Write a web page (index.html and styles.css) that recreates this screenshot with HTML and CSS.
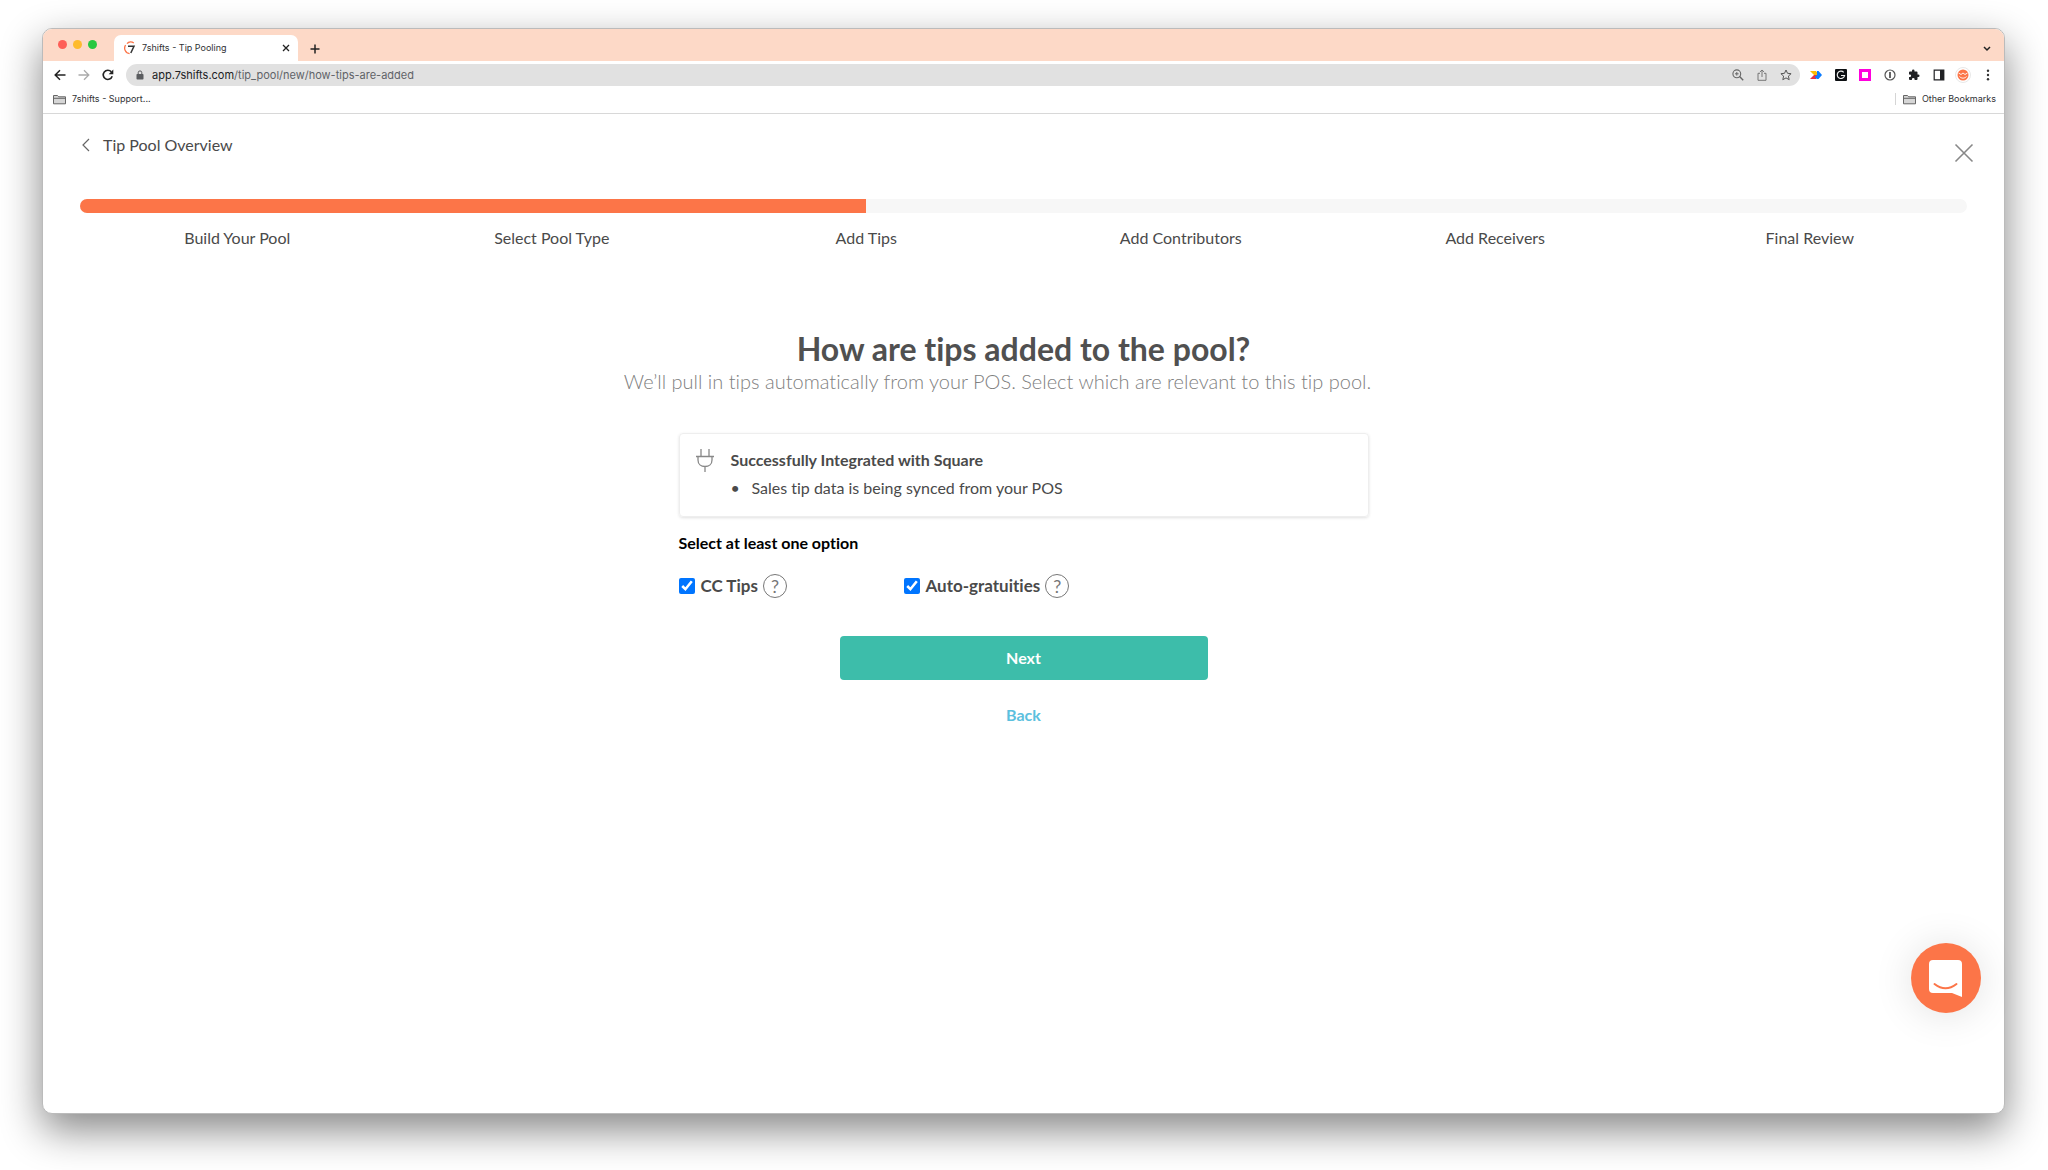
FILE: index.html
```html
<!DOCTYPE html>
<html lang="en">
<head>
<meta charset="utf-8">
<title>7shifts - Tip Pooling</title>
<link rel="stylesheet" href="styles.css">
</head>
<body>
<div class="window">
  <header class="chrome">
    <div class="tabstrip">
      <div class="lights"><span class="light red"></span><span class="light amber"></span><span class="light green"></span></div>
      <div class="tab">
        <svg class="favicon" viewBox="0 0 12 14"><path d="M1.600 4.200A5.400 5.400 0 0 0 5.600 12.600M3 2.600A5 5 0 0 1 9.800 2" fill="none" stroke="#fc7548" stroke-width="1.300"/><path d="M4 5.200h6L6.800 12" fill="none" stroke="#333" stroke-width="1.500"/></svg>
        <span class="tab-title">7shifts - Tip Pooling</span>
        <button class="icon-button" aria-label="Close tab"><svg width="8" height="8" viewBox="0 0 8 8"><path d="M1 1l6 6M7 1L1 7" stroke="#222" stroke-width="1.300"/></svg></button>
      </div>
      <button class="icon-button new-tab" aria-label="New tab"><svg width="10" height="10" viewBox="0 0 10 10"><path d="M5 .5v9M.5 5h9" stroke="#222" stroke-width="1.500"/></svg></button>
      <button class="icon-button tab-search" aria-label="Search tabs"><svg width="8" height="6" viewBox="0 0 8 6"><path d="M1 1l3 3 3-3" fill="none" stroke="#222" stroke-width="1.500"/></svg></button>
    </div>
    <div class="toolbar">
      <nav class="history">
        <button class="icon-button" aria-label="Back"><svg width="12" height="12" viewBox="0 0 12 12"><path d="M11.500 6H1.500M6 1.200L1.200 6 6 10.800" fill="none" stroke="#222" stroke-width="1.500"/></svg></button>
        <button class="icon-button" aria-label="Forward"><svg width="12" height="12" viewBox="0 0 12 12"><path d="M.5 6h10M6 1.200L10.800 6 6 10.800" fill="none" stroke="#aaa" stroke-width="1.300"/></svg></button>
        <button class="icon-button" aria-label="Reload"><svg width="12" height="12" viewBox="0 0 12 12"><path d="M10.200 7.300A4.600 4.600 0 1 1 9.300 2.800" fill="none" stroke="#222" stroke-width="1.600"/><path d="M11.300.6v4.600H6.700z" fill="#222"/></svg></button>
      </nav>
      <div class="omnibox">
        <svg width="8" height="10" viewBox="0 0 8 10"><rect x=".5" y="4" width="7" height="5.500" rx=".8" fill="#5a5c5f"/><path d="M2.200 4.500V2.700a1.800 1.800 0 0 1 3.600 0v1.800" fill="none" stroke="#5a5c5f" stroke-width="1"/></svg>
        <span class="url"><span class="host">app.7shifts.com</span>/tip_pool/new/how-tips-are-added</span>
        <button class="icon-button" aria-label="Zoom"><svg width="12" height="12" viewBox="0 0 12 12"><circle cx="4.800" cy="4.800" r="3.900" fill="none" stroke="#666" stroke-width="1.100"/><path d="M7.600 7.600l3.600 3.600" stroke="#666" stroke-width="1.400"/><path d="M3 4.800h3.600M4.800 3v3.600" stroke="#666"/></svg></button>
        <button class="icon-button" aria-label="Share"><svg width="12" height="12" viewBox="0 0 12 12"><path d="M4 4.300H2v7h8v-7H8M6 8V1M3.900 3L6 1l2.100 2" fill="none" stroke="#777"/></svg></button>
        <button class="icon-button" aria-label="Bookmark"><svg width="12" height="12" viewBox="0 0 12 12"><path d="M6 1l1.500 3.300 3.600.4-2.700 2.400.8 3.600L6 8.900l-3.200 1.800.8-3.600L.9 4.700l3.600-.4z" fill="none" stroke="#555"/></svg></button>
      </div>
      <div class="extensions">
        <button class="icon-button" aria-label="Color arrow extension"><svg width="14" height="12" viewBox="0 0 14 12"><path d="M1 2h6l3 4H5z" fill="#fbbc04"/><path d="M1 10h6l2-4H5z" fill="#ea2f3f"/><path d="M8 2h1.500L13 6l-3.500 4H8L5.500 8 8 6z" fill="#0b7cff"/></svg></button>
        <button class="icon-button" aria-label="G extension"><svg width="12" height="12" viewBox="0 0 12 12"><rect width="12" height="12" rx="1" fill="#0c0f12"/><path d="M8.700 3.300A3.700 3.700 0 1 0 9.600 6.500H6" fill="none" stroke="#eee" stroke-width="1.200"/></svg></button>
        <button class="icon-button" aria-label="Magenta extension"><svg width="12" height="12" viewBox="0 0 12 12"><path d="M0 0h12v12H0z" fill="#f0d"/><path d="M3 3h6v6H3z" fill="#fff"/></svg></button>
        <button class="icon-button" aria-label="Password extension"><svg width="12" height="12" viewBox="0 0 12 12"><circle cx="6" cy="6" r="5" fill="none" stroke="#555" stroke-width="1.200"/><path d="M6 3v6" stroke="#555" stroke-width="1.800"/></svg></button>
        <button class="icon-button" aria-label="Extensions"><svg width="12" height="12" viewBox="0 0 24 24"><path d="M20.500 11H19V7a2 2 0 0 0-2-2h-4V3.500a2.500 2.500 0 0 0-5 0V5H4a2 2 0 0 0-2 2v3.800h1.500a2.700 2.700 0 0 1 0 5.400H2V20a2 2 0 0 0 2 2h3.800v-1.500a2.700 2.700 0 0 1 5.400 0V22H17a2 2 0 0 0 2-2v-4h1.500a2.500 2.500 0 0 0 0-5z" fill="#202124"/></svg></button>
        <button class="icon-button" aria-label="Side panel"><svg width="12" height="12" viewBox="0 0 12 12"><path d="M1.200 1.200h9.600v9.600H1.200z" fill="none" stroke="#202124" stroke-width="1.200"/><path d="M7 1h4v10H7z" fill="#202124"/></svg></button>
        <button class="icon-button" aria-label="Profile"><svg width="16" height="16" viewBox="0 0 16 16"><circle cx="8" cy="8" r="7.500" fill="#fff" stroke="#e8e8e8"/><circle cx="8" cy="8" r="5.500" fill="#fc7548"/><path d="M3.500 6L6 7.500l2-1.500 2 1.500L12.500 6M4.500 9.500c2 2.200 5 2.200 7 0" fill="none" stroke="#fff" stroke-width=".9"/></svg></button>
        <button class="icon-button" aria-label="Menu"><svg width="4" height="12" viewBox="0 0 4 12"><g fill="#333"><circle cx="2" cy="1.800" r="1.200"/><circle cx="2" cy="6" r="1.200"/><circle cx="2" cy="10.200" r="1.200"/></g></svg></button>
      </div>
    </div>
    <div class="bookmarks">
      <a class="bookmark" href="#"><svg width="13" height="11" viewBox="0 0 13 11"><path d="M.5 1.500h4l1.200 1.300h6.800v7H.5z" fill="#d6d6d6" stroke="#666"/><path d="M.5 4.300h12" stroke="#666"/></svg>7shifts - Support...</a>
      <a class="bookmark other" href="#"><svg width="13" height="11" viewBox="0 0 13 11"><path d="M.5 1.500h4l1.200 1.300h6.800v7H.5z" fill="#d6d6d6" stroke="#666"/><path d="M.5 4.300h12" stroke="#666"/></svg>Other Bookmarks</a>
    </div>
  </header>
  <main class="page">
    <div class="topline">
      <a class="overview" href="#"><svg width="8" height="14" viewBox="0 0 8 14"><path d="M7 1L1 7l6 6" fill="none" stroke="#666" stroke-width="1.200"/></svg>Tip Pool Overview</a>
      <button class="icon-button close" aria-label="Close"><svg width="20" height="20" viewBox="0 0 20 20"><path d="M1.500 1.500l17 17M18.500 1.500l-17 17" stroke="#888" stroke-width="1.600"/></svg></button>
    </div>
    <div class="progress"><div class="progress-fill"></div></div>
    <ol class="steps">
      <li>Build Your Pool</li><li>Select Pool Type</li><li>Add Tips</li><li>Add Contributors</li><li>Add Receivers</li><li>Final Review</li>
    </ol>
    <div class="intro">
      <h1>How are tips added to the pool?</h1>
      <p>We’ll pull in tips automatically from your POS. Select which are relevant to this tip pool.</p>
    </div>
    <form class="form">
      <section class="card">
        <svg width="20" height="24" viewBox="0 0 20 24"><path d="M6 1v7M14 1v7M1 8.500h18M3 8.500v3.500c0 4 3 6.500 7 6.500s7-2.500 7-6.500V8.500M10 18.500V24" fill="none" stroke="#888" stroke-width="1.300"/></svg>
        <div class="card-body">
          <h2>Successfully Integrated with Square</h2>
          <ul><li>Sales tip data is being synced from your POS</li></ul>
        </div>
      </section>
      <fieldset class="options">
        <legend>Select at least one option</legend>
        <div class="option-row">
          <div class="option"><input type="checkbox" id="cc" checked><label for="cc">CC Tips</label><button type="button" class="help" aria-label="About CC Tips">?</button></div>
          <div class="option"><input type="checkbox" id="auto" checked><label for="auto">Auto-gratuities</label><button type="button" class="help" aria-label="About Auto-gratuities">?</button></div>
        </div>
      </fieldset>
      <button type="button" class="next">Next</button>
      <a class="back" href="#">Back</a>
    </form>
  </main>
  <button class="chat" aria-label="Open chat"><svg width="34" height="38" viewBox="0 0 34 38"><path d="M4 0h25a4 4 0 0 1 4 4v33l-10-4H4a4 4 0 0 1-4-4V4a4 4 0 0 1 4-4z" fill="#fff"/><path d="M5.500 24c7 5.500 15 5.500 22 0" fill="none" stroke="#fc7548" stroke-width="2" stroke-linecap="round"/></svg></button>
</div>
</body>
</html>
```
FILE: styles.css
```css
* { box-sizing: border-box; }
body {
  margin: 0;
  min-height: 100vh;
  padding: 28px 43px 56px 42px;
  display: flex;
  background: #fff;
  color: #4a4a4a;
  font: 16px/20px Lato, sans-serif;
  font-variant-ligatures: none;
}
svg { display: block; flex: none; }
a { color: inherit; text-decoration: none; }
button { font: inherit; cursor: pointer; }
.icon-button {
  display: flex;
  align-items: center;
  justify-content: center;
  padding: 0;
  border: 0;
  background: none;
}
.window {
  position: relative;
  flex: 1;
  display: flex;
  flex-direction: column;
  border: 1px solid #bbb;
  border-radius: 10px;
  background: #fff;
  box-shadow: 0 16px 40px rgba(0, 0, 0, .48);
}

/* Browser chrome */
.chrome { color: #303134; font: 10px/12px Inter, sans-serif; border-bottom: 1px solid #d8d8d8; }
.tabstrip {
  display: flex;
  height: 32px;
  padding-left: 15px;
  padding-right: 13px;
  border-radius: 9px 9px 0 0;
  background: #fdd9c7;
}
.lights { display: flex; gap: 6px; width: 56px; padding-top: 11px; }
.light { width: 9px; height: 9px; border-radius: 50%; }
.red { background: #fe5f57; }
.amber { background: #febb2e; }
.green { background: #28c840; }
.tab {
  display: flex;
  align-items: center;
  width: 184px;
  margin-top: 6px;
  padding: 0 8px 0 10px;
  border-radius: 7px 7px 0 0;
  background: #fff;
}
.favicon { width: 12px; height: 14px; }
.tab-title { flex: 1; padding-left: 6px; font-size: 9px; }
.new-tab { width: 34px; padding-top: 7px; }
.tab-search { margin-left: auto; padding-top: 7px; }
.toolbar { display: flex; align-items: center; height: 28px; padding: 0 4px 0 11px; }
.history { display: flex; gap: 12px; width: 72px; }
.omnibox {
  flex: 1;
  display: flex;
  align-items: center;
  gap: 12px;
  height: 22px;
  padding: 0 8px 0 10px;
  border-radius: 11px;
  background: #e1e1e1;
}
.url { flex: 1; margin-left: -4px; font-size: 11px; color: #5f6368; }
.host { color: #202124; }
.extensions { display: grid; grid-template-columns: repeat(8, 1fr); width: 196px; margin-left: 4px; }
.bookmarks { display: flex; justify-content: space-between; height: 24px; padding: 0 8px 4px 10px; font-size: 9px; }
.bookmark { display: flex; align-items: center; gap: 6px; }
.other { padding-left: 8px; background: linear-gradient(#d5d5d5, #d5d5d5) left center / 1px 12px no-repeat; }

/* Wizard */
.page { flex: 1; padding: 21px 37px; }
.topline { display: flex; justify-content: space-between; height: 64px; }
.overview { display: flex; gap: 13px; align-items: center; height: 20px; padding-left: 2px; }
.close { align-self: flex-start; width: 20px; height: 20px; margin-top: 8px; margin-right: -7px; }
.progress { height: 14px; border-radius: 7px; background: #f7f7f7; overflow: hidden; }
.progress-fill { width: 41.67%; height: 100%; background: #fc7548; }
.steps {
  display: grid;
  grid-template-columns: repeat(6, 1fr);
  margin: 15px 0 0;
  padding: 0;
  list-style: none;
  text-align: center;
}
.intro { padding-top: 81px; text-align: center; }
h1 { margin: 0; font-size: 32px; line-height: 40px; font-weight: 700; color: #505050; }
.intro p { margin: 0; padding-right: 52px; font-size: 20px; line-height: 24px; font-weight: 300; color: #808080; }
.form { display: flex; flex-direction: column; max-width: 690px; margin: 40px auto 0; }
.card {
  display: flex;
  gap: 16px;
  padding: 14px 15px;
  min-height: 84px;
  border: 1px solid #eee;
  border-radius: 4px;
  box-shadow: 0 1px 3px rgba(0, 0, 0, .12);
}
h2 { margin: 0; font-size: 16px; line-height: 24px; font-weight: 700; }
.card ul { margin: 4px 0 0; padding: 0; list-style: none; line-height: 24px; }
.card li { display: flex; }
.card li::before { content: "•"; width: 21px; }
.options { margin: 16px 0 0; padding: 0; border: 0; }
legend { padding: 0; font-weight: 700; color: #000; }
.option-row { display: grid; grid-template-columns: 225px 1fr; padding-top: 20px; }
.option { display: flex; align-items: center; height: 26px; font-size: 17px; font-weight: 700; }
.option input { width: 16px; height: 16px; margin: 0 6px 0 0; accent-color: #0075ff; }
.help {
  width: 24px;
  height: 24px;
  margin-left: 5px;
  padding: 0;
  border: 1px solid #777;
  border-radius: 50%;
  background: none;
  color: #777;
  font-size: 18px;
  font-weight: 400;
  line-height: 22px;
}
.next {
  align-self: center;
  width: 368px;
  height: 44px;
  margin-top: 37px;
  border: 0;
  border-radius: 4px;
  background: #3dbdaa;
  color: #fff;
  font-weight: 700;
}
.back { align-self: center; margin-top: 25px; color: #5bc0de; font-weight: 700; }
.chat {
  position: absolute;
  right: 23px;
  bottom: 100px;
  display: flex;
  align-items: center;
  justify-content: center;
  width: 70px;
  height: 70px;
  padding: 2px 0 0;
  border: 0;
  border-radius: 50%;
  background: #fc7548;
  box-shadow: 0 2px 40px rgba(0, 0, 0, .12);
}
```
